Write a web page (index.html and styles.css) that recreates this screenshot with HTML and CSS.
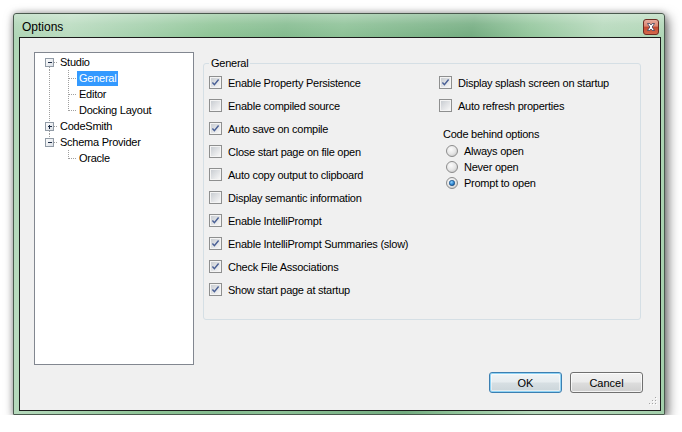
FILE: index.html
```html
<!DOCTYPE html>
<html>
<head>
<meta charset="utf-8">
<title>Options</title>
<link rel="stylesheet" href="styles.css">
</head>
<body>
<svg class="defs" width="0" height="0" aria-hidden="true">
  <defs>
    <linearGradient id="cbIn" x1="0" y1="0" x2="1" y2="1">
      <stop offset="0" stop-color="#c9cdd2"/>
      <stop offset="1" stop-color="#f7f7f7"/>
    </linearGradient>
    <radialGradient id="rdIn" cx="0.4" cy="0.35" r="0.7">
      <stop offset="0" stop-color="#fbfbfb"/>
      <stop offset="0.6" stop-color="#e6e6e6"/>
      <stop offset="1" stop-color="#c8c8c8"/>
    </radialGradient>
    <radialGradient id="rdDot" cx="0.4" cy="0.35" r="0.7">
      <stop offset="0" stop-color="#8fd1ff"/>
      <stop offset="0.6" stop-color="#2f86d0"/>
      <stop offset="1" stop-color="#134b86"/>
    </radialGradient>
    <linearGradient id="boxIn" x1="0" y1="0" x2="1" y2="1">
      <stop offset="0" stop-color="#ffffff"/>
      <stop offset="1" stop-color="#d8dde3"/>
    </linearGradient>
    <symbol id="cb" viewBox="0 0 13 13">
      <rect x="0.5" y="0.5" width="12" height="12" fill="#f4f4f4" stroke="#8e8f8f"/>
      <rect x="2" y="2" width="9" height="9" fill="url(#cbIn)"/>
    </symbol>
    <symbol id="cbOn" viewBox="0 0 13 13">
      <use href="#cb"/>
      <path d="M3.4 6.5 L5.4 8.7 L9.6 3.5" fill="none" stroke="#4a6096" stroke-width="1.45"/>
    </symbol>
    <symbol id="rd" viewBox="0 0 12 12">
      <circle cx="6" cy="6" r="5.5" fill="url(#rdIn)" stroke="#8c8c8c"/>
    </symbol>
    <symbol id="rdOn" viewBox="0 0 12 12">
      <use href="#rd"/>
      <circle cx="6" cy="6" r="2.7" fill="url(#rdDot)" stroke="#16487c" stroke-width="0.6"/>
    </symbol>
    <symbol id="tVert" viewBox="0 0 19 16">
      <path d="M10.5 0V16" stroke="#a0a0a0" stroke-dasharray="1 1" shape-rendering="crispEdges"/>
    </symbol>
    <symbol id="tTee" viewBox="0 0 19 16">
      <path d="M10.5 0V16M11 8.5H19" stroke="#a0a0a0" stroke-dasharray="1 1" shape-rendering="crispEdges"/>
    </symbol>
    <symbol id="tEll" viewBox="0 0 19 16">
      <path d="M10.5 0V9M11 8.5H19" stroke="#a0a0a0" stroke-dasharray="1 1" shape-rendering="crispEdges"/>
    </symbol>
    <symbol id="tFirstMinus" viewBox="0 0 19 16">
      <path d="M10.5 13V16M15 8.5H19" stroke="#a0a0a0" stroke-dasharray="1 1" shape-rendering="crispEdges"/>
      <rect x="6.5" y="4.5" width="8" height="8" fill="url(#boxIn)" stroke="#919ba6" shape-rendering="crispEdges"/>
      <path d="M8.5 8.5H12.5" stroke="#1c2b44" shape-rendering="crispEdges"/>
    </symbol>
    <symbol id="tMidPlus" viewBox="0 0 19 16">
      <path d="M10.5 0V4M10.5 13V16M15 8.5H19" stroke="#a0a0a0" stroke-dasharray="1 1" shape-rendering="crispEdges"/>
      <rect x="6.5" y="4.5" width="8" height="8" fill="url(#boxIn)" stroke="#919ba6" shape-rendering="crispEdges"/>
      <path d="M8.5 8.5H12.5M10.5 6.5V10.5" stroke="#1c2b44" shape-rendering="crispEdges"/>
    </symbol>
    <symbol id="tLastMinus" viewBox="0 0 19 16">
      <path d="M10.5 0V4M15 8.5H19" stroke="#a0a0a0" stroke-dasharray="1 1" shape-rendering="crispEdges"/>
      <rect x="6.5" y="4.5" width="8" height="8" fill="url(#boxIn)" stroke="#919ba6" shape-rendering="crispEdges"/>
      <path d="M8.5 8.5H12.5" stroke="#1c2b44" shape-rendering="crispEdges"/>
    </symbol>
  </defs>
</svg>

<div class="window">
  <div class="titlebar">
    <span class="title">Options</span>
    <span class="close">
      <svg width="16" height="16" viewBox="0 0 16 16">
        <defs>
          <linearGradient id="closeBg" x1="0" y1="0" x2="0" y2="1">
            <stop offset="0" stop-color="#eab0a2"/>
            <stop offset="0.45" stop-color="#d98571"/>
            <stop offset="0.5" stop-color="#c4492f"/>
            <stop offset="1" stop-color="#d56a4e"/>
          </linearGradient>
        </defs>
        <rect x="0.5" y="0.5" width="15" height="15" rx="2.5" fill="url(#closeBg)" stroke="#6b2c22"/>
        <path d="M4.5 4.5h2.3l1.2 1.5 1.2-1.5h2.3l-2.3 3.5 2.3 3.5h-2.3l-1.2-1.5-1.2 1.5h-2.3l2.3-3.5z" fill="#ffffff" stroke="#3b3d58" stroke-width="0.8" stroke-linejoin="round"/>
      </svg>
    </span>
  </div>

  <div class="client">
    <div class="main">
      <div class="tree">
        <div class="node"><svg class="cell"><use href="#tFirstMinus"/></svg><span class="label">Studio</span></div>
        <div class="node"><svg class="cell"><use href="#tVert"/></svg><svg class="cell"><use href="#tTee"/></svg><span class="label selected">General</span></div>
        <div class="node"><svg class="cell"><use href="#tVert"/></svg><svg class="cell"><use href="#tTee"/></svg><span class="label">Editor</span></div>
        <div class="node"><svg class="cell"><use href="#tVert"/></svg><svg class="cell"><use href="#tEll"/></svg><span class="label">Docking Layout</span></div>
        <div class="node"><svg class="cell"><use href="#tMidPlus"/></svg><span class="label">CodeSmith</span></div>
        <div class="node"><svg class="cell"><use href="#tLastMinus"/></svg><span class="label">Schema Provider</span></div>
        <div class="node"><span class="cell"></span><svg class="cell"><use href="#tEll"/></svg><span class="label">Oracle</span></div>
      </div>

      <fieldset class="group">
        <legend>General</legend>
        <div class="cols">
          <div class="col col-left">
            <div class="check"><svg class="box"><use href="#cbOn"/></svg><span>Enable Property Persistence</span></div>
            <div class="check"><svg class="box"><use href="#cb"/></svg><span>Enable compiled source</span></div>
            <div class="check"><svg class="box"><use href="#cbOn"/></svg><span>Auto save on compile</span></div>
            <div class="check"><svg class="box"><use href="#cb"/></svg><span>Close start page on file open</span></div>
            <div class="check"><svg class="box"><use href="#cb"/></svg><span>Auto copy output to clipboard</span></div>
            <div class="check"><svg class="box"><use href="#cb"/></svg><span>Display semantic information</span></div>
            <div class="check"><svg class="box"><use href="#cbOn"/></svg><span>Enable IntelliPrompt</span></div>
            <div class="check"><svg class="box"><use href="#cbOn"/></svg><span>Enable IntelliPrompt Summaries (slow)</span></div>
            <div class="check"><svg class="box"><use href="#cbOn"/></svg><span>Check File Associations</span></div>
            <div class="check"><svg class="box"><use href="#cbOn"/></svg><span>Show start page at startup</span></div>
          </div>
          <div class="col col-right">
            <div class="check"><svg class="box"><use href="#cbOn"/></svg><span>Display splash screen on startup</span></div>
            <div class="check"><svg class="box"><use href="#cb"/></svg><span>Auto refresh properties</span></div>
            <div class="sublabel">Code behind options</div>
            <div class="radios">
              <div class="radio"><svg class="dot"><use href="#rd"/></svg><span>Always open</span></div>
              <div class="radio"><svg class="dot"><use href="#rd"/></svg><span>Never open</span></div>
              <div class="radio"><svg class="dot"><use href="#rdOn"/></svg><span>Prompt to open</span></div>
            </div>
          </div>
        </div>
      </fieldset>
    </div>

    <div class="buttons">
      <button class="btn default">OK</button>
      <button class="btn">Cancel</button>
    </div>

    <svg class="grip" width="12" height="12" viewBox="0 0 12 12">
      <g fill="#ffffff">
        <rect x="10" y="2" width="1" height="1"/>
        <rect x="7" y="5" width="1" height="1"/><rect x="10" y="5" width="1" height="1"/>
        <rect x="4" y="8" width="1" height="1"/><rect x="7" y="8" width="1" height="1"/><rect x="10" y="8" width="1" height="1"/>
      </g>
      <g fill="#a4a4a4">
        <rect x="9" y="1" width="1" height="1"/>
        <rect x="6" y="4" width="1" height="1"/><rect x="9" y="4" width="1" height="1"/>
        <rect x="3" y="7" width="1" height="1"/><rect x="6" y="7" width="1" height="1"/><rect x="9" y="7" width="1" height="1"/>
      </g>
    </svg>
  </div>
</div>
</body>
</html>
```

FILE: styles.css
```css
html, body {
  margin: 0;
  padding: 0;
  background: #ffffff;
}

body {
  font-family: "Liberation Sans", Arial, sans-serif;
  font-size: 11px;
  letter-spacing: -0.25px;
  color: #000000;
}

.defs {
  position: absolute;
  width: 0;
  height: 0;
  overflow: hidden;
}

.window {
  box-sizing: border-box;
  width: 652px;
  height: 402px;
  margin: 13px 0 0 13px;
  border: 1px solid #4a5a4e;
  border-radius: 3px 3px 0 0;
  padding: 0 3px 3px 5px;
  display: flex;
  flex-direction: column;
  background:
    linear-gradient(180deg, rgba(255,255,255,0.35) 0, rgba(255,255,255,0.12) 10px, rgba(255,255,255,0) 23px),
    linear-gradient(100deg, #aed5b5 0%, #b9dbbf 8%, #a4d0ac 18%, #8ec496 28%, #83bb8e 38%, #8cc196 46%, #7bb387 58%, #73ac80 64%, #93c69c 72%, #b6d9bc 82%, #b0d6b6 90%, #a3cfab 100%);
  box-shadow: 3px 4px 12px rgba(0, 0, 0, 0.55), 0 0 6px rgba(0, 0, 0, 0.25);
}

.titlebar {
  height: 23px;
  flex: none;
  display: flex;
  align-items: flex-start;
  justify-content: space-between;
  padding: 0 2px 0 3px;
}

.title {
  font-size: 12px;
  letter-spacing: 0;
  line-height: 14px;
  margin-top: 6px;
  color: #000;
}

.close {
  display: flex;
  margin-top: 5px;
}

.client {
  flex: 1;
  position: relative;
  display: flex;
  flex-direction: column;
  background: #f0f0f0;
  border: 1px solid #1b1b1b;
  padding: 14px 17px 0 14px;
}

.main {
  display: flex;
  align-items: flex-start;
}

/* tree view */
.tree {
  box-sizing: border-box;
  width: 160px;
  height: 313px;
  flex: none;
  border: 1px solid #828790;
  background: #ffffff;
  padding: 1px 0 0 4px;
}

.node {
  display: flex;
  height: 16px;
  align-items: flex-start;
}

.cell {
  display: block;
  width: 19px;
  height: 16px;
  flex: none;
}

.label {
  height: 15px;
  line-height: 15px;
  margin-top: 1px;
  padding: 0 2px;
  white-space: nowrap;
}

.label.selected {
  background: #3399ff;
  color: #ffffff;
}

/* group box */
.group {
  box-sizing: border-box;
  width: 438px;
  height: 264px;
  flex: none;
  margin: 4px 0 0 9px;
  border: 1px solid #d5dfe5;
  border-radius: 3px;
  padding: 5px 5px 0 5px;
  min-width: 0;
}

.group legend {
  padding: 0 2px;
  line-height: 15px;
}

.cols {
  display: flex;
}

.col {
  display: flex;
  flex-direction: column;
}

.col-left {
  width: 230px;
  flex: none;
  gap: 10px;
}

.col-right {
  flex: 1;
}

.check {
  display: flex;
  align-items: center;
  height: 13px;
  gap: 6px;
  white-space: nowrap;
}

.col-right .check + .check {
  margin-top: 10px;
}

.box {
  width: 13px;
  height: 13px;
  flex: none;
  display: block;
}

.sublabel {
  margin: 15px 0 0 4px;
  line-height: 15px;
}

.radios {
  margin: 1px 0 0 7px;
  display: flex;
  flex-direction: column;
}

.radio {
  display: flex;
  align-items: center;
  height: 16px;
  gap: 6px;
  white-space: nowrap;
}

.dot {
  width: 12px;
  height: 12px;
  flex: none;
  display: block;
}

/* buttons */
.buttons {
  display: flex;
  justify-content: flex-end;
  gap: 8px;
  margin-top: 7px;
}

.btn {
  box-sizing: border-box;
  width: 73px;
  height: 21px;
  padding: 0;
  font-family: "Liberation Sans", Arial, sans-serif;
  font-size: 11px;
  letter-spacing: 0;
  color: #000;
  border: 1px solid #707070;
  border-radius: 3px;
  background: linear-gradient(180deg, #f2f2f2 0%, #ebebeb 48%, #dddddd 52%, #cfcfcf 100%);
  box-shadow: inset 0 0 0 1px rgba(255, 255, 255, 0.75);
}

.btn.default {
  border-color: #3c7fb1;
  background: linear-gradient(180deg, #f0f4f6 0%, #e6ecef 48%, #d7dfe3 52%, #cbd5da 100%);
  box-shadow: inset 0 0 0 1px #8fd3f5, inset 0 0 0 2px rgba(255, 255, 255, 0.5);
}

.grip {
  position: absolute;
  right: 2px;
  bottom: 2px;
}
```
